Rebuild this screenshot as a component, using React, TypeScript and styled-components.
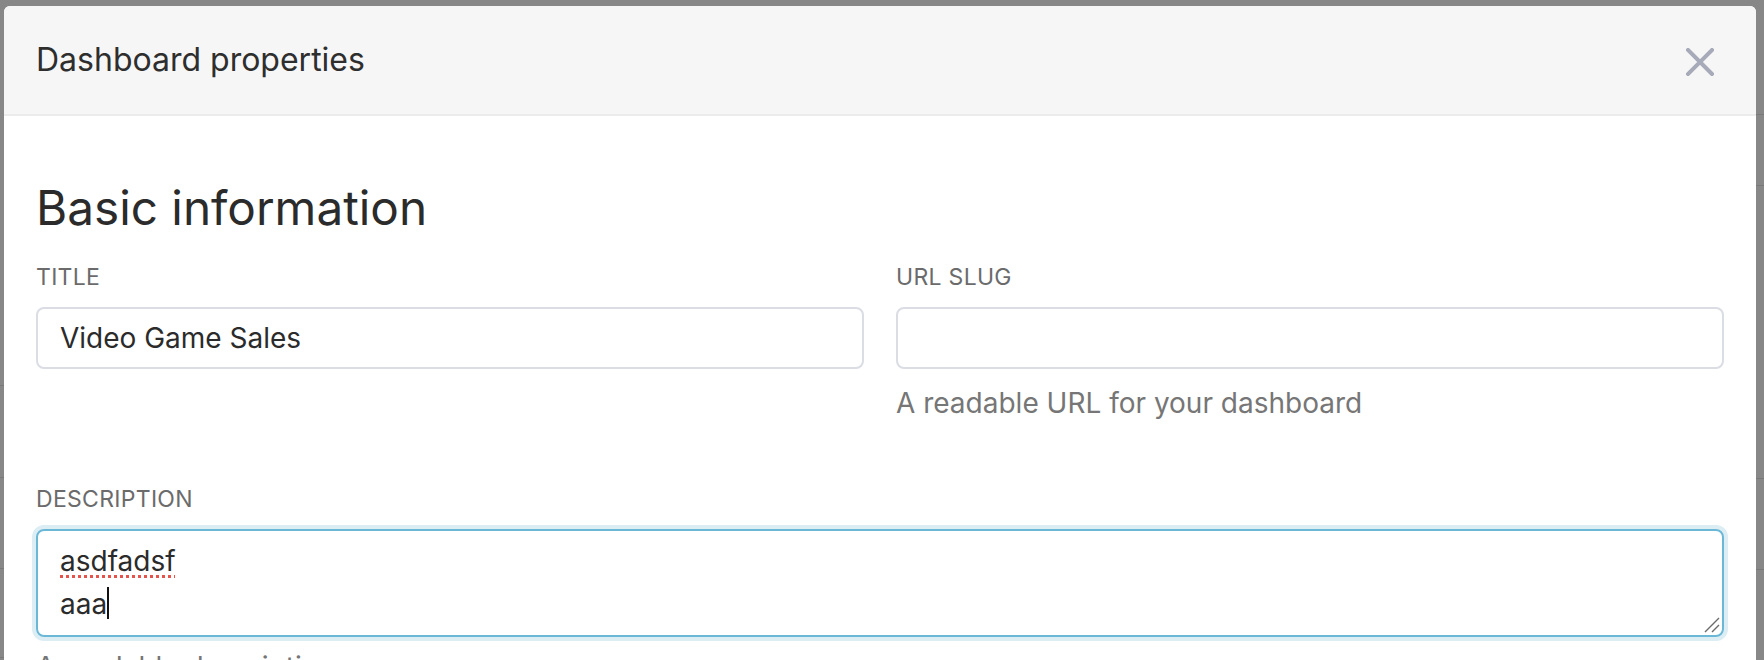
import React from "react";
import styled, { createGlobalStyle } from "styled-components";

const Global = createGlobalStyle`
  html, body { margin: 0; padding: 0; }
  body {
    width: 1764px;
    height: 660px;
    overflow: hidden;
    background: #ffffff;
    font-family: Inter, "Noto Sans", sans-serif;
  }
`;

const Page = styled.div`
  display: grid;
  grid-template-columns: 1fr 1fr;
  height: 660px;
`;

const PageColumn = styled.div`
  display: flex;
  flex-direction: column;
`;

const PageRow = styled.div<{ $h: number }>`
  height: ${(p) => p.$h}px;
  flex: none;
  border-bottom: 1px solid #e4e4e4;
`;

const Backdrop = styled.div`
  position: fixed;
  inset: 0;
  background: rgba(0, 0, 0, 0.47);
  display: flex;
  align-items: flex-start;
  padding: 6px 8px 0 4px;
  overflow: hidden;
`;

const Modal = styled.div`
  flex: 1;
  background: #ffffff;
  border-radius: 6px 6px 0 0;
  min-height: 800px;
  overflow: hidden;
`;

const Header = styled.div`
  height: 108px;
  display: flex;
  align-items: center;
  justify-content: space-between;
  padding: 0 42px 0 32px;
  background: #f6f6f6;
  border-bottom: 2px solid #ececec;
`;

const ModalTitle = styled.h1`
  margin: 0;
  font-size: 32px;
  font-weight: 400;
  color: #2e2e2e;
  line-height: 1.2;
`;

const CloseButton = styled.button`
  border: 0;
  background: none;
  padding: 0;
  width: 28px;
  height: 28px;
  display: flex;
  align-items: center;
  justify-content: center;
  cursor: pointer;
  margin-top: 4px;
`;

const Body = styled.div`
  padding: 64px 32px 0;
`;

const SectionHeading = styled.h2`
  margin: 0;
  font-size: 47.7px;
  font-weight: 400;
  line-height: 1.2;
  color: #2b2b2b;
`;

const FieldRow = styled.div`
  display: grid;
  grid-template-columns: 1fr 1fr;
  column-gap: 32px;
  margin-top: 27px;
`;

const Field = styled.div<{ $mt?: number }>`
  display: flex;
  flex-direction: column;
  margin-top: ${(p) => p.$mt ?? 0}px;
`;

const Label = styled.label`
  font-size: 23px;
  line-height: 1.2;
  color: #6b6b6b;
  text-transform: uppercase;
  letter-spacing: 0.3px;
`;

const Input = styled.input`
  margin-top: 15px;
  height: 62px;
  box-sizing: border-box;
  border: 2px solid #dadde4;
  border-radius: 8px;
  padding: 0 22px;
  font-family: Inter, "Noto Sans", sans-serif;
  font-size: 28px;
  color: #2b2b2b;
  outline: none;
  background: #ffffff;
`;

const Helper = styled.div<{ $mt?: number }>`
  margin-top: ${(p) => p.$mt ?? 18}px;
  font-size: 28px;
  line-height: 1.2;
  color: #767676;
`;

const TextArea = styled.div`
  position: relative;
  margin-top: 15px;
  box-sizing: border-box;
  border: 2px solid #6ab8d6;
  box-shadow: 0 0 0 4px #dcedf4;
  border-radius: 8px;
  padding: 9px 22px 9px;
  font-size: 28px;
  line-height: 43px;
  color: #2b2b2b;
  white-space: pre-wrap;
`;

const Misspelled = styled.span`
  text-decoration-line: underline;
  text-decoration-style: dotted;
  text-decoration-color: #e5534b;
  text-decoration-thickness: 3px;
  text-underline-offset: 4px;
`;

const Caret = styled.span`
  display: inline-block;
  width: 2px;
  height: 32px;
  background: #111111;
  vertical-align: -5px;
`;

const Grip = styled.svg`
  position: absolute;
  right: 1px;
  bottom: 2px;
`;

const leftRows = [385, 91, 90, 88];
const rightRows = [114, 70, 292, 90];

export default function App() {
  return (
    <>
      <Global />
      <Page>
        <PageColumn>
          {leftRows.map((h, i) => (
            <PageRow key={i} $h={h} />
          ))}
        </PageColumn>
        <PageColumn>
          {rightRows.map((h, i) => (
            <PageRow key={i} $h={h} />
          ))}
        </PageColumn>
      </Page>
      <Backdrop>
        <Modal>
          <Header>
            <ModalTitle>Dashboard properties</ModalTitle>
            <CloseButton aria-label="Close">
              <svg width="28" height="28" viewBox="0 0 28 28">
                <path
                  d="M2 2 L26 26 M26 2 L2 26"
                  stroke="#a7aab8"
                  strokeWidth="4"
                  strokeLinecap="square"
                />
              </svg>
            </CloseButton>
          </Header>
          <Body>
            <SectionHeading>Basic information</SectionHeading>
            <FieldRow>
              <Field>
                <Label>Title</Label>
                <Input defaultValue="Video Game Sales" />
              </Field>
              <Field>
                <Label>URL slug</Label>
                <Input defaultValue="" />
                <Helper>A readable URL for your dashboard</Helper>
              </Field>
            </FieldRow>
            <Field $mt={66}>
              <Label>Description</Label>
              <TextArea>
                <Misspelled>asdfadsf</Misspelled>
                {"\n"}aaa
                <Caret />
                <Grip width="18" height="17" viewBox="0 0 18 17">
                  <path d="M2 16 L16 2 M9 16 L16 9" stroke="#6a6a6a" strokeWidth="1.4" />
                </Grip>
              </TextArea>
              <Helper $mt={14}>A readable description</Helper>
            </Field>
          </Body>
        </Modal>
      </Backdrop>
    </>
  );
}
